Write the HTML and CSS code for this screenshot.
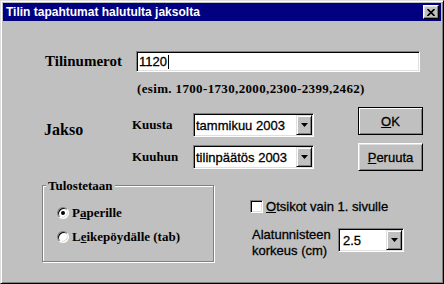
FILE: index.html
```html
<!DOCTYPE html>
<html lang="fi">
<head>
<meta charset="utf-8">
<title>Tilin tapahtumat halutulta jaksolta</title>
<link rel="stylesheet" href="styles.css">
</head>
<body>
<div class="window">
  <div class="titlebar">
    <span class="title">Tilin tapahtumat halutulta jaksolta</span>
    <button class="close" type="button" aria-label="Sulje">
      <svg width="8" height="7" viewBox="0 0 8 7"><path d="M0.5 0 L7.5 7 M7.5 0 L0.5 7" stroke="#000" stroke-width="1.7" fill="none"/></svg>
    </button>
  </div>
  <div class="content">
    <div class="account-row">
      <label class="label-big">Tilinumerot</label>
      <div class="field">1120<span class="caret"></span></div>
    </div>
    <div class="hint">(esim. 1700-1730,2000,2300-2399,2462)</div>

    <div class="period-row">
      <div class="jakso">Jakso</div>
      <div class="period-grid">
        <span class="label-small">Kuusta</span>
        <div class="combo"><span class="combo-text">tammikuu 2003</span><span class="combo-btn"><svg width="7" height="4" viewBox="0 0 7 4"><path d="M0 0 H7 L3.5 4 Z" fill="#000"/></svg></span></div>
        <span class="label-small">Kuuhun</span>
        <div class="combo"><span class="combo-text">tilinpäätös 2003</span><span class="combo-btn"><svg width="7" height="4" viewBox="0 0 7 4"><path d="M0 0 H7 L3.5 4 Z" fill="#000"/></svg></span></div>
      </div>
      <div class="buttons">
        <button class="btn default" type="button"><u>O</u>K</button>
        <button class="btn" type="button"><u>P</u>eruuta</button>
      </div>
    </div>

    <div class="bottom-row">
      <fieldset class="group">
        <legend>Tulostetaan</legend>
        <div class="radio-list">
          <div class="radio-row"><span class="radio checked"><span class="dot"></span></span><span>P<u>a</u>perille</span></div>
          <div class="radio-row"><span class="radio"></span><span>L<u>e</u>ikepöydälle (tab)</span></div>
        </div>
      </fieldset>
      <div class="options">
        <div class="check-row"><span class="checkbox"></span><span><u>O</u>tsikot vain 1. sivulle</span></div>
        <div class="footer-row">
          <div class="footer-label">Alatunnisteen<br>korkeus (cm)</div>
          <div class="combo small"><span class="combo-text">2.5</span><span class="combo-btn"><svg width="7" height="4" viewBox="0 0 7 4"><path d="M0 0 H7 L3.5 4 Z" fill="#000"/></svg></span></div>
        </div>
      </div>
    </div>
  </div>
</div>
</body>
</html>
```

FILE: styles.css
```css
html, body {
  margin: 0;
  padding: 0;
  background: #c0c0c0;
}

.window {
  width: 444px;
  height: 284px;
  box-sizing: border-box;
  background: #c0c0c0;
  border: 1px solid;
  border-color: #dfdfdf #000 #000 #dfdfdf;
  box-shadow: inset 1px 1px #fff, inset -1px -1px #808080;
  padding: 2px;
  font-family: "Liberation Sans", Arial, sans-serif;
}

.titlebar {
  height: 18px;
  background: #000080;
  display: flex;
  align-items: center;
  justify-content: space-between;
  padding: 0 2px 0 3px;
}

.title {
  color: #fff;
  font: bold 12px "Liberation Sans", Arial, sans-serif;
  line-height: 14px;
}

.close {
  width: 16px;
  height: 14px;
  box-sizing: border-box;
  padding: 0;
  margin: 0;
  background: #c0c0c0;
  border: 1px solid;
  border-color: #fff #000 #000 #fff;
  box-shadow: inset -1px -1px #808080, inset 1px 1px #dfdfdf;
  display: flex;
  align-items: center;
  justify-content: center;
}

.close svg { display: block; }

.sans-heavy,
.field,
.combo-text,
.btn,
.check-row,
.footer-label {
  -webkit-text-stroke: 0.3px #000;
}

/* Account row */
.account-row {
  display: flex;
  align-items: center;
  margin: 30px 0 0 42px;
}

.label-big {
  width: 91px;
  font: bold 15px "Liberation Serif", "Times New Roman", serif;
  color: #000;
}

.field {
  width: 284px;
  height: 21px;
  box-sizing: border-box;
  background: #fff;
  border: 1px solid;
  border-color: #808080 #fff #fff #808080;
  box-shadow: inset 1px 1px #000, inset -1px -1px #dfdfdf;
  padding: 0 2px;
  display: flex;
  align-items: center;
  font-size: 13px;
  color: #000;
}

.caret {
  display: inline-block;
  width: 1px;
  height: 14px;
  background: #000;
  margin-left: 1px;
}

.hint {
  margin: 9px 0 0 134px;
  font: bold 13px "Liberation Serif", "Times New Roman", serif;
  line-height: 15px;
  letter-spacing: 0.35px;
}

/* Period row */
.period-row {
  display: flex;
  align-items: flex-start;
  margin-top: 11px;
}

.jakso {
  margin: 14px 0 0 41px;
  width: 88px;
  font: bold 16px "Liberation Serif", "Times New Roman", serif;
  line-height: 18px;
}

.period-grid {
  display: grid;
  grid-template-columns: 61px 121px;
  row-gap: 8px;
  align-items: center;
  margin-top: 6px;
}

.label-small {
  font: bold 13px "Liberation Serif", "Times New Roman", serif;
}

.combo {
  height: 24px;
  box-sizing: border-box;
  background: #fff;
  border: 1px solid;
  border-color: #808080 #fff #fff #808080;
  box-shadow: inset 1px 1px #000, inset -1px -1px #dfdfdf;
  padding: 1px;
  display: flex;
  align-items: center;
}

.combo-text {
  flex: 1;
  padding-left: 1px;
  font-size: 13px;
  color: #000;
  white-space: nowrap;
}

.combo-btn {
  width: 16px;
  height: 20px;
  box-sizing: border-box;
  background: #c0c0c0;
  border: 1px solid;
  border-color: #dfdfdf #000 #000 #dfdfdf;
  box-shadow: inset 1px 1px #fff, inset -1px -1px #808080;
  display: flex;
  align-items: center;
  justify-content: center;
}

.combo-btn svg { display: block; }

.combo.small {
  width: 66px;
  margin-top: 1px;
}

.combo.small .combo-text { padding-left: 3px; }

.buttons {
  display: flex;
  flex-direction: column;
  gap: 8px;
  margin-left: 44px;
}

.btn {
  width: 65px;
  height: 28px;
  box-sizing: border-box;
  padding: 0;
  margin: 0;
  background: #c0c0c0;
  border: 1px solid;
  border-color: #fff #000 #000 #fff;
  box-shadow: inset 1px 1px #dfdfdf, inset -1px -1px #808080;
  font: 13px "Liberation Sans", Arial, sans-serif;
  color: #000;
}

.btn.default {
  border-color: #000;
  box-shadow: inset 1px 1px #fff, inset -1px -1px #808080;
}

/* Bottom row */
.bottom-row {
  display: flex;
  align-items: flex-start;
  margin-top: 7px;
}

.group {
  margin: 0 0 0 39px;
  width: 172px;
  min-width: 0;
  box-sizing: border-box;
  padding: 0 0 16px 0;
  border: 1px solid #808080;
  box-shadow: inset 1px 1px #fff, 1px 1px #fff;
}

.group legend {
  margin-left: 3px;
  padding: 0 2px;
  font: bold 13px "Liberation Serif", "Times New Roman", serif;
  line-height: 15px;
  background: #c0c0c0;
}

.radio-list {
  display: flex;
  flex-direction: column;
  gap: 8px;
  padding: 12px 0 0 14px;
}

.radio-row {
  display: flex;
  align-items: center;
  gap: 3px;
  height: 16px;
  font: bold 13px "Liberation Serif", "Times New Roman", serif;
}

.radio {
  width: 12px;
  height: 12px;
  box-sizing: border-box;
  border-radius: 50%;
  background: #fff;
  border: 1px solid;
  border-color: #808080 #fff #fff #808080;
  box-shadow: inset 1px 1px #000, inset -1px -1px #dfdfdf;
  display: flex;
  align-items: center;
  justify-content: center;
}

.dot {
  width: 4px;
  height: 4px;
  border-radius: 50%;
  background: #000;
}

.options {
  margin: 22px 0 0 36px;
}

.check-row {
  display: flex;
  align-items: center;
  gap: 3px;
  height: 13px;
  font-size: 13px;
}

.checkbox {
  width: 13px;
  height: 13px;
  box-sizing: border-box;
  background: #fff;
  border: 1px solid;
  border-color: #808080 #fff #fff #808080;
  box-shadow: inset 1px 1px #000, inset -1px -1px #dfdfdf;
  -webkit-text-stroke: 0;
}

.footer-row {
  display: flex;
  align-items: flex-start;
  margin-top: 14px;
}

.footer-label {
  width: 86px;
  margin-left: 2px;
  font-size: 13px;
  line-height: 16px;
}
```
